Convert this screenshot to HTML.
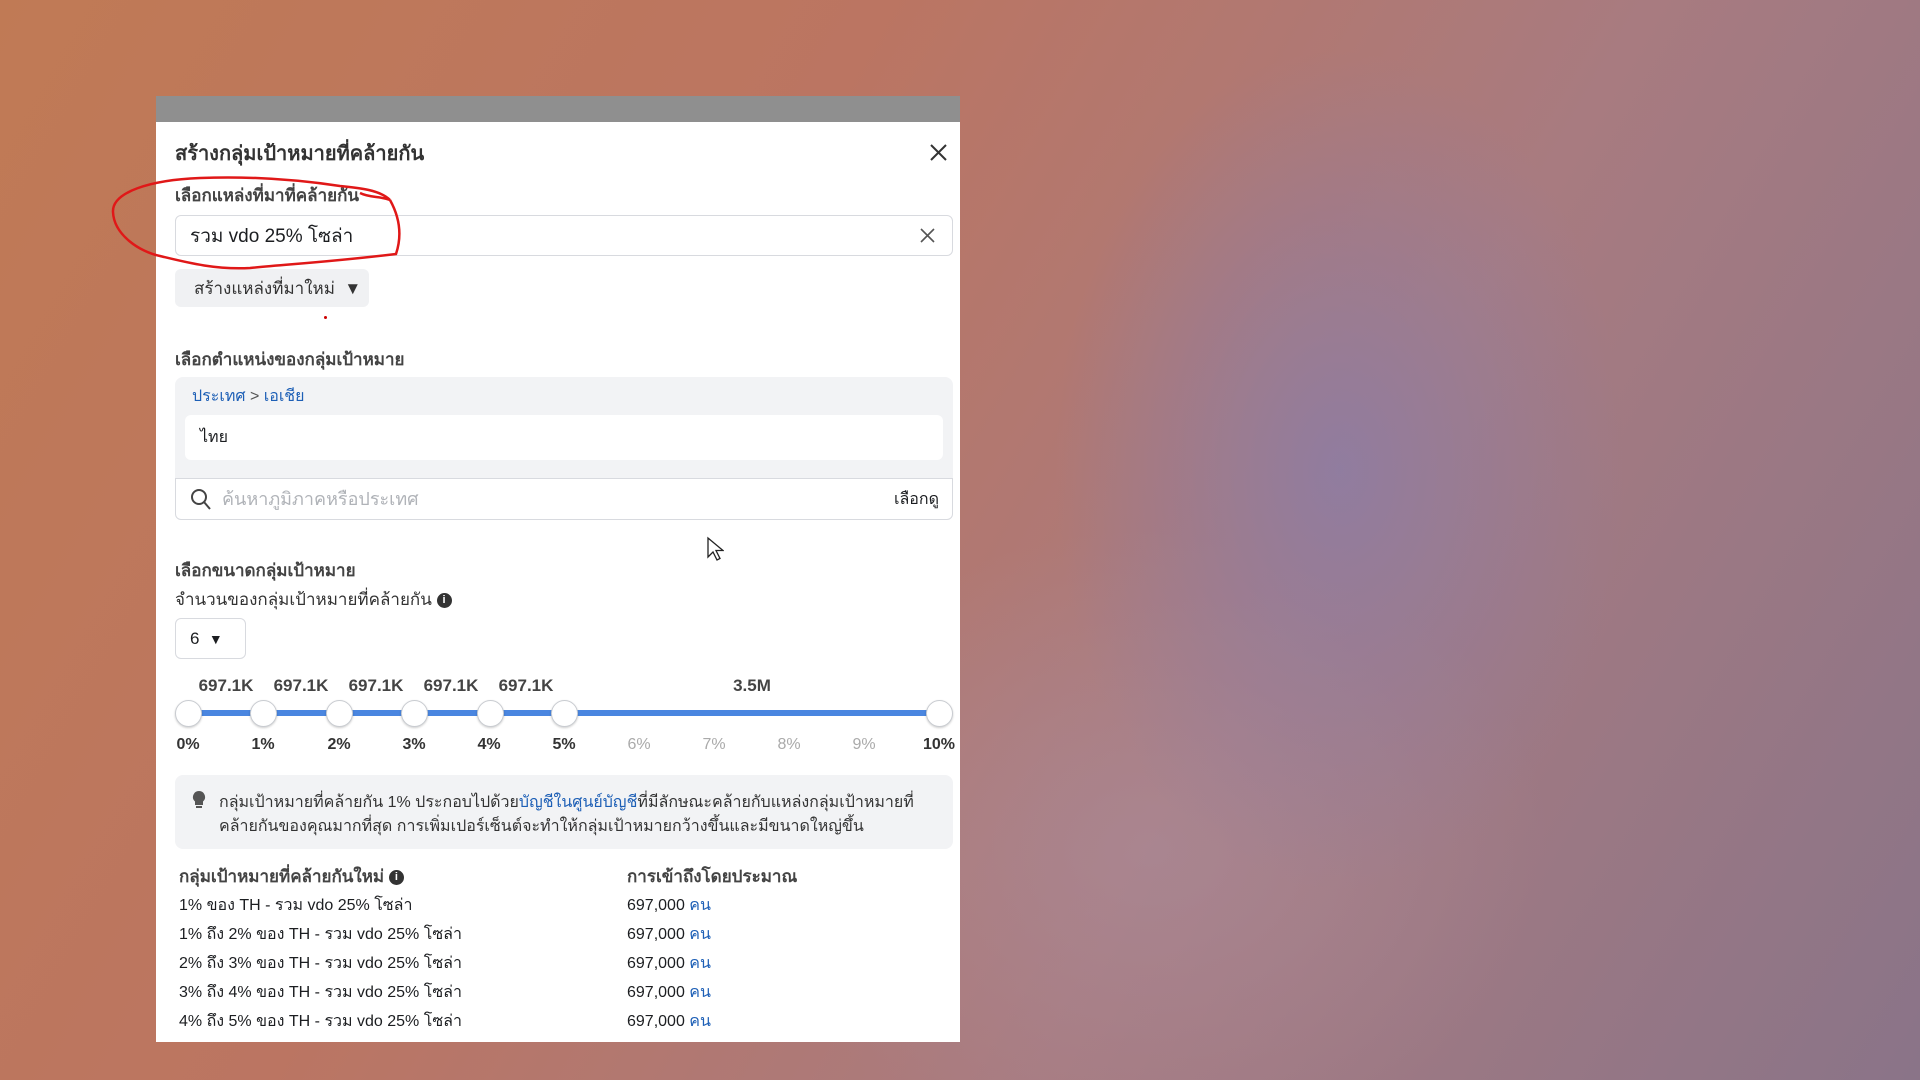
<!DOCTYPE html>
<html><head><meta charset="utf-8"><style>
*{box-sizing:border-box;margin:0;padding:0}
body{width:1920px;height:1080px;overflow:hidden;position:relative;font-family:"Liberation Sans","Noto Sans CJK SC",sans-serif;color:#1c1e21;
background:
radial-gradient(ellipse 380px 560px at 1340px 470px,rgba(140,125,165,.85),rgba(140,125,165,0) 75%),
radial-gradient(ellipse 500px 400px at 1150px 850px,rgba(170,140,155,.6),rgba(170,140,155,0) 80%),
linear-gradient(120deg,#c07a55 0%,#bb7562 35%,#a87b80 65%,#8a7488 100%);}
.abs{position:absolute}
.dlg{left:156px;top:96px;width:804px;height:946px;background:#fff;overflow:hidden}
.bar{left:0;top:0;width:804px;height:26px;background:#8f8f8f}
.t{position:absolute;white-space:nowrap;font-size:17px;line-height:1}
.box{position:absolute;border:1px solid #d8dadf;border-radius:6px;background:#fff}
.knob{position:absolute;width:27px;height:27px;border-radius:50%;background:#fff;border:1px solid #c9ccd1;box-shadow:0 1px 2px rgba(0,0,0,.2);top:-13px}
.pl{position:absolute;font-size:16px;font-weight:bold;top:23px;transform:translateX(-50%);color:#333}
.vl{position:absolute;font-size:17px;font-weight:bold;top:-37px;transform:translateX(-50%);color:#444}
.blue{color:#1d5fb6}
.info{display:inline-block;width:15px;height:15px;border-radius:50%;background:#333;color:#fff;font-size:11px;text-align:center;line-height:15px;font-weight:bold;vertical-align:middle}
</style></head><body>
<div class="abs dlg">
 <div class="abs bar"></div>
 <div class="t" style="left:19px;top:48px;font-size:20px;font-weight:bold;color:#333">สร้างกลุ่มเป้าหมายที่คล้ายกัน</div>
 <svg class="abs" style="left:774px;top:48px" width="17" height="17" viewBox="0 0 17 17"><path d="M1 1L16 16M16 1L1 16" stroke="#333" stroke-width="2"/></svg>
 <div class="t" style="left:19px;top:91px;font-size:17px;font-weight:bold;color:#444">เลือกแหล่งที่มาที่คล้ายกัน</div>
 <div class="box" style="left:19px;top:119px;width:778px;height:41px"></div>
 <div class="t" style="left:34px;top:131px;font-size:19px">รวม vdo 25% โซล่า</div>
 <svg class="abs" style="left:764px;top:132px" width="15" height="15" viewBox="0 0 15 15"><path d="M1 1L14 14M14 1L1 14" stroke="#555" stroke-width="1.6"/></svg>
 <div class="abs" style="left:19px;top:173px;width:194px;height:38px;background:#f0f1f3;border-radius:6px"></div>
 <div class="t" style="left:38px;top:184px;font-size:17px;color:#333">สร้างแหล่งที่มาใหม่ &nbsp;▼</div>
 <div class="abs" style="left:168px;top:220px;width:3px;height:3px;background:#c00;border-radius:50%"></div>
 <div class="t" style="left:19px;top:255px;font-size:17px;font-weight:bold;color:#444">เลือกตำแหน่งของกลุ่มเป้าหมาย</div>
 <div class="abs" style="left:19px;top:281px;width:778px;height:101px;background:#f2f3f5;border-radius:8px 8px 0 0"></div>
 <div class="t blue" style="left:36px;top:293px;font-size:16px">ประเทศ <span style="color:#555">&gt;</span> เอเชีย</div>
 <div class="abs" style="left:29px;top:319px;width:758px;height:45px;background:#fff;border-radius:6px"></div>
 <div class="t" style="left:44px;top:334px;font-size:16px">ไทย</div>
 <div class="box" style="left:19px;top:382px;width:778px;height:42px;border-radius:0 0 6px 6px"></div>
 <svg class="abs" style="left:34px;top:392px" width="22" height="24" viewBox="0 0 22 24"><circle cx="9" cy="9" r="7" fill="none" stroke="#444" stroke-width="2"/><path d="M14 14l6 7" stroke="#444" stroke-width="2"/></svg>
 <div class="t" style="left:66px;top:394px;font-size:18px;color:#b0b3b8">ค้นหาภูมิภาคหรือประเทศ</div>
 <div class="t" style="left:738px;top:396px;font-size:16px">เลือกดู</div>
 <svg class="abs" style="left:550px;top:440px" width="18" height="26" viewBox="0 0 18 26"><path d="M2 2v19l5-5 4 8 3-1.5-4-8h7z" fill="#fff" stroke="#222" stroke-width="1.3"/></svg>
 <div class="t" style="left:19px;top:466px;font-size:17px;font-weight:bold;color:#444">เลือกขนาดกลุ่มเป้าหมาย</div>
 <div class="t" style="left:19px;top:495px;font-size:17px;color:#333">จำนวนของกลุ่มเป้าหมายที่คล้ายกัน <span class="info">i</span></div>
 <div class="box" style="left:19px;top:522px;width:71px;height:41px"></div>
 <div class="t" style="left:34px;top:534px;font-size:17px">6 &nbsp;<span style="font-size:14px">▼</span></div>
 <div class="abs" style="left:32px;top:617px;width:751px;height:0">
  <div class="abs" style="left:0;top:-3px;width:751px;height:6px;background:#4a86e0"></div>
  <div class="vl" style="left:38px">697.1K</div><div class="vl" style="left:113px">697.1K</div><div class="vl" style="left:188px">697.1K</div><div class="vl" style="left:263px">697.1K</div><div class="vl" style="left:338px">697.1K</div><div class="vl" style="left:564px">3.5M</div>
  <div class="knob" style="left:-13px"></div><div class="knob" style="left:62px"></div><div class="knob" style="left:138px"></div><div class="knob" style="left:213px"></div><div class="knob" style="left:289px"></div><div class="knob" style="left:363px"></div><div class="knob" style="left:738px"></div>
  <div class="pl" style="left:0">0%</div><div class="pl" style="left:75px">1%</div><div class="pl" style="left:151px">2%</div><div class="pl" style="left:226px">3%</div><div class="pl" style="left:301px">4%</div><div class="pl" style="left:376px">5%</div>
  <div class="pl" style="left:451px;color:#aaa;font-weight:normal">6%</div><div class="pl" style="left:526px;color:#aaa;font-weight:normal">7%</div><div class="pl" style="left:601px;color:#aaa;font-weight:normal">8%</div><div class="pl" style="left:676px;color:#aaa;font-weight:normal">9%</div><div class="pl" style="left:751px">10%</div>
 </div>
 <div class="abs" style="left:19px;top:679px;width:778px;height:74px;background:#f2f3f5;border-radius:8px"></div>
 <svg class="abs" style="left:36px;top:694px" width="14" height="20" viewBox="0 0 14 20"><path d="M7 1a6 6 0 0 0-4 10.5V15h8v-3.5A6 6 0 0 0 7 1z" fill="#555"/><rect x="4" y="16" width="6" height="2" fill="#555"/></svg>
 <div class="t" style="left:63px;top:695px;font-size:16px;line-height:24px;color:#333">กลุ่มเป้าหมายที่คล้ายกัน 1% ประกอบไปด้วย<span class="blue">บัญชีในศูนย์บัญชี</span>ที่มีลักษณะคล้ายกับแหล่งกลุ่มเป้าหมายที่<br>คล้ายกันของคุณมากที่สุด การเพิ่มเปอร์เซ็นต์จะทำให้กลุ่มเป้าหมายกว้างขึ้นและมีขนาดใหญ่ขึ้น</div>
 <div class="t" style="left:23px;top:772px;font-size:17px;font-weight:bold;color:#444">กลุ่มเป้าหมายที่คล้ายกันใหม่ <span class="info">i</span></div>
 <div class="t" style="left:471px;top:772px;font-size:17px;font-weight:bold;color:#444">การเข้าถึงโดยประมาณ</div>
 <div class="t" style="left:23px;top:802px;font-size:16px">1% ของ TH - รวม vdo 25% โซล่า</div>
 <div class="t" style="left:23px;top:831px;font-size:16px">1% ถึง 2% ของ TH - รวม vdo 25% โซล่า</div>
 <div class="t" style="left:23px;top:860px;font-size:16px">2% ถึง 3% ของ TH - รวม vdo 25% โซล่า</div>
 <div class="t" style="left:23px;top:889px;font-size:16px">3% ถึง 4% ของ TH - รวม vdo 25% โซล่า</div>
 <div class="t" style="left:23px;top:918px;font-size:16px">4% ถึง 5% ของ TH - รวม vdo 25% โซล่า</div>
 <div class="t" style="left:471px;top:802px;font-size:16px">697,000 <span class="blue">คน</span></div>
 <div class="t" style="left:471px;top:831px;font-size:16px">697,000 <span class="blue">คน</span></div>
 <div class="t" style="left:471px;top:860px;font-size:16px">697,000 <span class="blue">คน</span></div>
 <div class="t" style="left:471px;top:889px;font-size:16px">697,000 <span class="blue">คน</span></div>
 <div class="t" style="left:471px;top:918px;font-size:16px">697,000 <span class="blue">คน</span></div>
</div>
<svg class="abs" style="left:0;top:0" width="1920" height="1080"><path d="M390 200C380 190 360 188 340 186C300 180 250 176 200 178C150 180 112 192 113 212C114 235 140 252 160 256C185 262 215 270 250 268C290 264 330 262 396 254C402 236 400 218 390 200M360 193C370 198 380 196 390 200" fill="none" stroke="#e01818" stroke-width="2.5"/></svg>
</body></html>
